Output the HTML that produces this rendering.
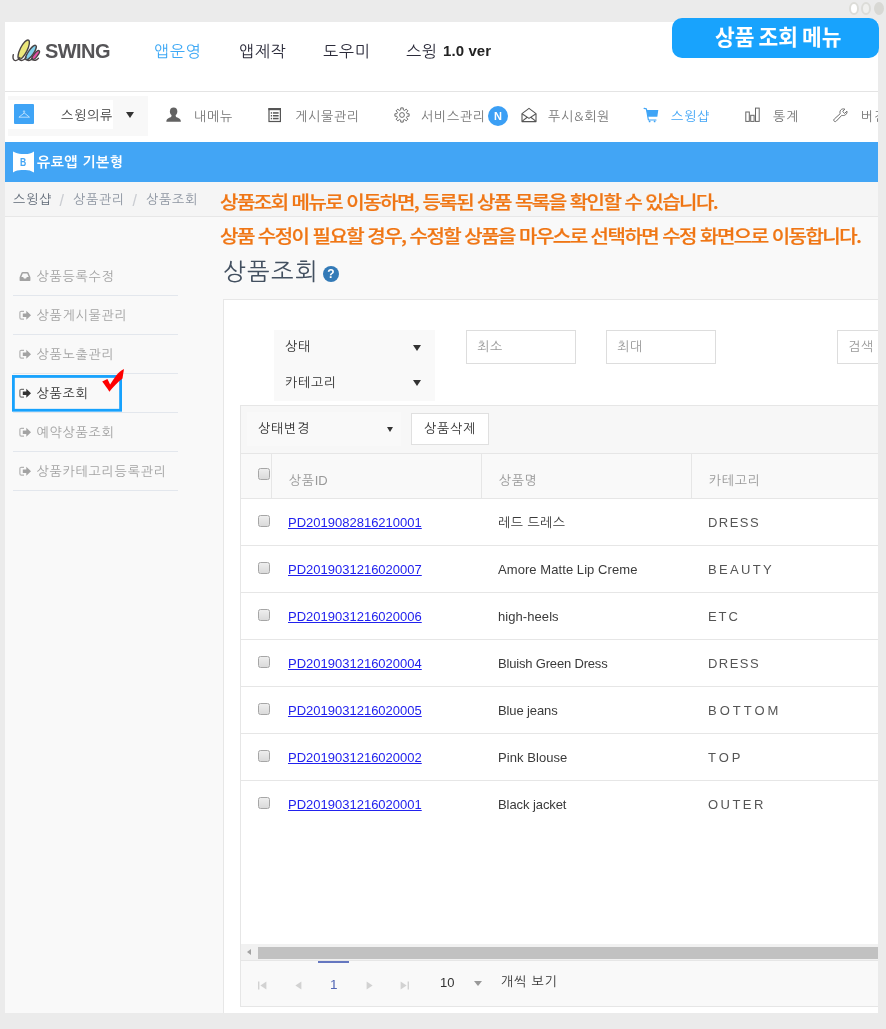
<!DOCTYPE html>
<html lang="ko">
<head>
<meta charset="utf-8">
<title>상품 조회 메뉴</title>
<style>
*{box-sizing:border-box;margin:0;padding:0}
html,body{width:886px;height:1029px;overflow:hidden;background:#ebebeb}
body{position:relative;font-family:"Liberation Sans","NanumGothic","Noto Sans CJK KR",sans-serif;font-size:13px;color:#333}
.abs{position:absolute}
#app{position:absolute;left:5px;top:22px;width:873px;height:991px;background:#fff;overflow:hidden}
/* coordinates inside #app are page coords minus (5,22) */
.kr{font-family:"NanumGothic","Liberation Sans","Noto Sans CJK KR",sans-serif}
.nv{font-size:13px;line-height:14px;color:#777;letter-spacing:0.8px;margin-top:0.5px}
.bc{font-size:13px;line-height:14px;color:#8d95a1;letter-spacing:0.8px}
.an{font-family:"Noto Sans CJK KR","NanumGothic",sans-serif;font-weight:500;font-size:20px;line-height:28px;color:#ef7615;letter-spacing:-1.52px;-webkit-text-stroke:0.25px #ef7615;transform:scaleY(0.93);transform-origin:0 0}
.sb{font-size:13px;line-height:14px;letter-spacing:0.8px}
.tri{width:0;height:0;border-left:4.3px solid transparent;border-right:4.3px solid transparent;border-top:6.6px solid #333;margin:0.4px 0 0 0.5px}
.inp{height:34px;border:1px solid #ddd;background:#fff;font-size:13px;line-height:32px;padding-left:10px;color:#999;letter-spacing:0.8px}
.cb{width:12px;height:12px;border:1px solid #a6a6a6;border-radius:2.5px;background:linear-gradient(#eeeeee,#dadada)}
.th{font-size:13px;line-height:14px;color:#999;letter-spacing:0.8px}
.lk{font:13px/14px "Liberation Sans",sans-serif;color:#2222ee;text-decoration:underline}
.nm{font:13px/14px "Liberation Sans","NanumGothic",sans-serif;color:#3a3a3a;letter-spacing:0.07px}
.ct{font:13px/14px "Liberation Sans",sans-serif;color:#555;letter-spacing:2px}
.t{position:absolute;white-space:nowrap;line-height:1}
</style>
</head>
<body>
<div id="app">
<div id="pg" class="abs" style="left:-5px;top:-22px;width:886px;height:1029px;will-change:transform">
<!-- logo -->
<svg class="abs" style="left:12px;top:37px" width="30" height="28" viewBox="0 0 30 28">
 <g stroke="#4a4546" stroke-width="1.4">
 <ellipse cx="11.7" cy="12.6" rx="3.5" ry="10.6" transform="rotate(26.6 11.7 12.6)" fill="#ece77a"/>
 <ellipse cx="18.9" cy="15.6" rx="2.6" ry="8.6" transform="rotate(34.8 18.9 15.6)" fill="#82d2ee"/>
 <ellipse cx="23.6" cy="18.2" rx="1.8" ry="5.7" transform="rotate(39 23.6 18.2)" fill="#e650a6"/>
 </g>
 <path d="M1.3 17.6 C0.5 21 1.4 23.8 3.8 23.6 C5.6 23.4 6.8 22.2 7.8 20.6 M7.2 22.4 C8.6 24.2 11.6 23.8 14 20.6 M15 22.8 C16.4 24.2 18.6 23.6 20.6 21.2 M21 22.6 C22.2 24 24.4 23.4 26.4 21.2" fill="none" stroke="#4a4546" stroke-width="1.4" stroke-linecap="round" stroke-linejoin="round"/>
</svg>
<div class="t" style="left:45px;top:41px;font:bold 20px/20px 'Liberation Sans',sans-serif;color:#555457;letter-spacing:-0.55px" id="swing">SWING</div>
<div class="t kr" id="m1" style="letter-spacing:0.8px;left:154px;top:42px;font-size:16px;line-height:18px;color:#3fa9f5">앱운영</div>
<div class="t kr" id="m2" style="letter-spacing:0.8px;left:239px;top:42px;font-size:16px;line-height:18px;color:#2b2b3a">앱제작</div>
<div class="t kr" id="m3" style="letter-spacing:0.8px;left:323px;top:42px;font-size:16px;line-height:18px;color:#2b2b3a">도우미</div>
<div class="t kr" id="m4" style="letter-spacing:0.8px;left:406px;top:42px;font-size:16px;line-height:18px;color:#2b2b3a">스윙 <span style="font:bold 15px/18px 'Liberation Sans',sans-serif;color:#222;letter-spacing:0.1px;position:relative;top:-1px">1.0 ver</span></div>
<div class="abs" style="left:5px;top:91px;width:873px;height:1px;background:#e4e4e4"></div>

<!-- nav row -->
<div class="abs" style="left:8px;top:96px;width:140px;height:40px;background:#f8f8f8"></div>
<div class="abs" style="left:8px;top:100px;width:105px;height:29px;background:#fff"></div>
<div class="abs" style="left:14px;top:104px;width:20px;height:20px;background:#3fa4f6;border-radius:1px"></div>
<svg class="abs" style="left:14px;top:104px" width="20" height="20" viewBox="0 0 20 20"><path d="M10 8.6 L4.9 12.6 L15.1 12.6 Z M10 8.6 L10 7.9 C10 7.4 10.7 7.3 10.7 6.8 C10.7 6.3 10.3 6.1 10 6.1 C9.6 6.1 9.3 6.4 9.3 6.8" fill="none" stroke="#d4ebff" stroke-width="0.8" stroke-linejoin="round" stroke-linecap="round" transform="translate(0 0.6)"/></svg>
<div class="t kr nv" id="n0" style="left:61px;top:108.5px;color:#3a3a3a">스윙의류</div>
<div class="abs" style="left:125.5px;top:112px;width:0;height:0;border-left:4.25px solid transparent;border-right:4.25px solid transparent;border-top:6px solid #333"></div>
<!-- person -->
<svg class="abs" style="left:166px;top:107px" width="16" height="16" viewBox="0 0 16 16"><ellipse cx="7.6" cy="4.6" rx="3.7" ry="4.1" fill="#626262"/><path d="M5.6 7.4 L9.6 7.4 C9.6 9.4 10 10 11.4 10.6 C13.4 11.4 14.8 12.4 14.9 14.7 L0.3 14.7 C0.4 12.4 1.8 11.4 3.8 10.6 C5.2 10 5.6 9.4 5.6 7.4 Z" fill="#626262"/></svg>
<div class="t kr nv" id="n1" style="left:194px;top:109px">내메뉴</div>
<!-- list -->
<svg class="abs" style="left:268px;top:107px" width="14" height="16" viewBox="0 0 14 16"><rect x="1" y="1.8" width="11.4" height="12.7" fill="#fff" stroke="#555" stroke-width="1.2"/><rect x="0.4" y="1" width="12.6" height="2.2" fill="#555"/><g fill="#555"><rect x="2.8" y="5.2" width="1.3" height="1.5"/><rect x="5" y="5.2" width="5.6" height="1.5"/><rect x="2.8" y="8" width="1.3" height="1.5"/><rect x="5" y="8" width="5.6" height="1.5"/><rect x="2.8" y="10.8" width="1.3" height="1.5"/><rect x="5" y="10.8" width="5.6" height="1.5"/></g></svg>
<div class="t kr nv" id="n2" style="left:295px;top:109px">게시물관리</div>
<!-- gear -->
<svg class="abs" style="left:393.6px;top:107px" width="16" height="16" viewBox="0 0 16 16"><path d="M6.74 2.85 L6.78 0.90 L9.22 0.90 L9.26 2.85 L10.75 3.47 L12.16 2.12 L13.88 3.84 L12.53 5.25 L13.15 6.74 L15.10 6.78 L15.10 9.22 L13.15 9.26 L12.53 10.75 L13.88 12.16 L12.16 13.88 L10.75 12.53 L9.26 13.15 L9.22 15.10 L6.78 15.10 L6.74 13.15 L5.25 12.53 L3.84 13.88 L2.12 12.16 L3.47 10.75 L2.85 9.26 L0.90 9.22 L0.90 6.78 L2.85 6.74 L3.47 5.25 L2.12 3.84 L3.84 2.12 L5.25 3.47 Z" fill="none" stroke="#636363" stroke-width="0.95" stroke-linejoin="round"/><circle cx="8" cy="8" r="2.4" fill="none" stroke="#636363" stroke-width="0.95"/></svg>
<div class="t kr nv" id="n3" style="left:421px;top:109px">서비스관리</div>
<div class="abs" style="left:488px;top:106px;width:20px;height:20px;border-radius:10px;background:#3b9ff5;color:#fff;font:bold 11px/20px 'Liberation Sans',sans-serif;text-align:center">N</div>
<!-- mail -->
<svg class="abs" style="left:521px;top:107px" width="16" height="16" viewBox="0 0 16 16"><path d="M1 6.6 L8 1.4 L15 6.6 L15 14.6 L1 14.6 Z" fill="none" stroke="#555" stroke-width="1.1" stroke-linejoin="round"/><path d="M1 6.8 L8 11.4 L15 6.8 M1 14.4 L6.2 10.2 M15 14.4 L9.8 10.2" fill="none" stroke="#555" stroke-width="1.1" stroke-linejoin="round"/></svg>
<div class="t kr nv" id="n4" style="left:548px;top:109px">푸시&amp;회원</div>
<!-- cart -->
<svg class="abs" style="left:643px;top:107px" width="16" height="16" viewBox="0 0 16 16"><path d="M1.1 1.4 L3.4 1.8 L5.4 13 L13 13" fill="none" stroke="#3fa4f6" stroke-width="1.2" stroke-linejoin="round" stroke-linecap="round"/><path d="M3.6 3.1 L15.3 3.1 L14.3 9.7 L4.8 9.7 Z" fill="#3fa4f6"/><circle cx="6.6" cy="14.4" r="0.9" fill="#3fa4f6"/><circle cx="11.6" cy="14.4" r="0.9" fill="#3fa4f6"/></svg>
<div class="t kr nv" id="n5" style="left:671px;top:109px;color:#3fa4f6">스윙샵</div>
<!-- bars -->
<svg class="abs" style="left:745px;top:107px" width="16" height="16" viewBox="0 0 16 16"><g fill="none" stroke="#666" stroke-width="1"><rect x="0.8" y="5" width="3.5" height="9.4"/><rect x="5.7" y="8.3" width="3.4" height="6.1"/><rect x="10.5" y="1.1" width="3.7" height="13.3"/></g></svg>
<div class="t kr nv" id="n6" style="left:773px;top:109px">통계</div>
<!-- wrench -->
<svg class="abs" style="left:832px;top:107px" width="17" height="16" viewBox="0 0 17 16"><path d="M14.9 4.2 L12.6 6.4 L10.7 4.5 L12.8 2.1 C11.2 1.6 9.5 2 8.6 3.2 C7.8 4.3 7.8 5.6 8.2 6.7 L2.3 12 C1.6 12.6 1.6 13.6 2.2 14.2 C2.8 14.8 3.7 14.7 4.3 14.1 L9.8 8.3 C11 8.8 12.5 8.6 13.6 7.7 C14.8 6.7 15.3 5.4 14.9 4.2 Z" fill="none" stroke="#666" stroke-width="0.95" stroke-linejoin="round"/></svg>
<div class="t kr nv" id="n7" style="left:861px;top:109px">버전관리</div>

<!-- blue bar -->
<div class="abs" style="left:5px;top:142px;width:873px;height:40px;background:#42a5f5"></div>
<svg class="abs" style="left:13px;top:151px" width="21" height="22" viewBox="0 0 21 22"><path d="M0 0.6 C3.5 2.8 7 3.3 10.5 2.9 C14 3.3 17.5 2.8 21 0.4 L21 21.6 C17.5 19.2 14 18.7 10.5 19.1 C7 18.7 3.5 19.2 0 21.4 Z" fill="#fff"/></svg>
<div class="t" style="left:20px;top:157px;font:bold 10.5px/11px 'Liberation Sans',sans-serif;color:#42a5f5;transform:scaleX(0.82);transform-origin:0 0">B</div>
<div class="t kr" id="bb" style="left:37px;top:154px;font-size:14px;line-height:16px;font-weight:bold;color:#fff;letter-spacing:0.5px">유료앱 기본형</div>
<!-- breadcrumb -->
<div class="abs" style="left:5px;top:182px;width:873px;height:35px;background:#f5f5f5;border-bottom:1px solid #e7e7e7"></div>
<div class="abs" style="left:5px;top:217px;width:873px;height:796px;background:#f9f9f9"></div>
<div class="t kr bc" id="bc1" style="margin-top:1px;left:13px;top:192px;color:#606a77">스윙샵</div>
<div class="t" id="sl1" style="left:59.5px;top:192px;font:16px/18px 'Liberation Sans',sans-serif;color:#c9ccd1">/</div>
<div class="t kr bc" id="bc2" style="margin-top:1px;left:73px;top:192px">상품관리</div>
<div class="t" id="sl2" style="left:132.5px;top:192px;font:16px/18px 'Liberation Sans',sans-serif;color:#c9ccd1">/</div>
<div class="t kr bc" id="bc3" style="margin-top:1px;left:146px;top:192px">상품조회</div>
<!-- orange annotation -->
<div class="t an" id="an1" style="left:220px;top:192.4px">상품조회 메뉴로 이동하면, 등록된 상품 목록을 확인할 수 있습니다.</div>
<div class="t an" id="an2" style="left:220px;top:225.6px">상품 수정이 필요할 경우, 수정할 상품을 마우스로 선택하면 수정 화면으로 이동합니다.</div>

<!-- sidebar -->
<svg class="abs" style="left:19px;top:271px" width="13" height="11" viewBox="0 0 13 11"><path d="M0.6 6.2 L2.6 1.6 C2.8 1.1 3.2 0.9 3.7 0.9 L8.3 0.9 C8.8 0.9 9.2 1.1 9.4 1.6 L11.4 6.2 L11.4 9.2 C11.4 9.7 11 10.1 10.5 10.1 L1.5 10.1 C1 10.1 0.6 9.7 0.6 9.2 Z M2.3 6 L4.2 6 L4.9 7.4 L7.1 7.4 L7.8 6 L9.7 6 L8.2 2.5 L3.8 2.5 Z" fill="#a3a3a3" fill-rule="evenodd"/></svg>
<div class="t kr sb" id="sb0" style="left:36.5px;top:270px;color:#a3a3a3">상품등록수정</div>
<div class="abs" style="left:13px;top:295px;width:165px;height:1px;background:#e3e7ed"></div>
<svg class="abs" style="left:19px;top:310px" width="13" height="11" viewBox="0 0 13 11"><path d="M5 1.3 L2.3 1.3 C1.4 1.3 0.9 1.9 0.9 2.7 L0.9 7.7 C0.9 8.5 1.4 9.1 2.3 9.1 L5 9.1" fill="none" stroke="#b4b4b4" stroke-width="1.2"/><path d="M3.8 3.5 L7.3 3.5 L7.3 0.7 L12 5.2 L7.3 9.7 L7.3 6.9 L3.8 6.9 Z" fill="#a3a3a3"/></svg>
<div class="t kr sb" id="sb1" style="left:36.5px;top:309px;color:#a3a3a3">상품게시물관리</div>
<div class="abs" style="left:13px;top:334px;width:165px;height:1px;background:#e3e7ed"></div>
<svg class="abs" style="left:19px;top:349px" width="13" height="11" viewBox="0 0 13 11"><path d="M5 1.3 L2.3 1.3 C1.4 1.3 0.9 1.9 0.9 2.7 L0.9 7.7 C0.9 8.5 1.4 9.1 2.3 9.1 L5 9.1" fill="none" stroke="#b4b4b4" stroke-width="1.2"/><path d="M3.8 3.5 L7.3 3.5 L7.3 0.7 L12 5.2 L7.3 9.7 L7.3 6.9 L3.8 6.9 Z" fill="#a3a3a3"/></svg>
<div class="t kr sb" id="sb2" style="left:36.5px;top:348px;color:#a3a3a3">상품노출관리</div>
<div class="abs" style="left:13px;top:373px;width:165px;height:1px;background:#e3e7ed"></div>
<svg class="abs" style="left:19px;top:388px" width="13" height="11" viewBox="0 0 13 11"><path d="M5 1.3 L2.3 1.3 C1.4 1.3 0.9 1.9 0.9 2.7 L0.9 7.7 C0.9 8.5 1.4 9.1 2.3 9.1 L5 9.1" fill="none" stroke="#777" stroke-width="1.2"/><path d="M3.8 3.5 L7.3 3.5 L7.3 0.7 L12 5.2 L7.3 9.7 L7.3 6.9 L3.8 6.9 Z" fill="#333"/></svg>
<div class="t kr sb" id="sb3" style="left:36.5px;top:387px;color:#333">상품조회</div>
<div class="abs" style="left:13px;top:412px;width:165px;height:1px;background:#e3e7ed"></div>
<svg class="abs" style="left:19px;top:427px" width="13" height="11" viewBox="0 0 13 11"><path d="M5 1.3 L2.3 1.3 C1.4 1.3 0.9 1.9 0.9 2.7 L0.9 7.7 C0.9 8.5 1.4 9.1 2.3 9.1 L5 9.1" fill="none" stroke="#b4b4b4" stroke-width="1.2"/><path d="M3.8 3.5 L7.3 3.5 L7.3 0.7 L12 5.2 L7.3 9.7 L7.3 6.9 L3.8 6.9 Z" fill="#a3a3a3"/></svg>
<div class="t kr sb" id="sb4" style="left:36.5px;top:426px;color:#a3a3a3">예약상품조회</div>
<div class="abs" style="left:13px;top:451px;width:165px;height:1px;background:#e3e7ed"></div>
<svg class="abs" style="left:19px;top:466px" width="13" height="11" viewBox="0 0 13 11"><path d="M5 1.3 L2.3 1.3 C1.4 1.3 0.9 1.9 0.9 2.7 L0.9 7.7 C0.9 8.5 1.4 9.1 2.3 9.1 L5 9.1" fill="none" stroke="#b4b4b4" stroke-width="1.2"/><path d="M3.8 3.5 L7.3 3.5 L7.3 0.7 L12 5.2 L7.3 9.7 L7.3 6.9 L3.8 6.9 Z" fill="#a3a3a3"/></svg>
<div class="t kr sb" id="sb5" style="left:36.5px;top:465px;color:#a3a3a3">상품카테고리등록관리</div>
<div class="abs" style="left:13px;top:490px;width:165px;height:1px;background:#e3e7ed"></div>
<svg class="abs" style="left:10px;top:373px" width="116" height="42" viewBox="0 0 116 42"><rect x="3.4" y="3.45" width="107.2" height="33.8" fill="none" stroke="#17a2fd" stroke-width="2.8"/></svg>
<svg class="abs" style="left:100px;top:366px" width="26" height="28" viewBox="0 0 26 28"><path d="M2.2 15.4 L7.4 12.9 C8.4 14.8 9.3 16.7 10.1 18.6 C12 15.4 14 12.3 16.2 9.5 C18.4 6.8 21 4.6 23.9 3 C23.8 4.6 23.5 6.2 23.2 7.7 L22.5 12.5 C20 14.4 17.6 16.6 15.3 19 C13.2 21.2 11.2 23.5 9.4 25.8 C8.3 23.9 7.1 22.1 5.8 20.4 C4.7 18.7 3.5 17 2.2 15.4 Z" fill="#fe0000"/></svg>
<!-- title -->
<div class="t kr" id="ttl" style="left:223px;top:257px;font-size:24px;line-height:28px;color:#435060;letter-spacing:1.5px">상품조회</div>
<div class="abs" style="left:323px;top:266px;width:16px;height:16px;border-radius:8px;background:#337ab7;color:#fff;font:bold 12px/16px 'Liberation Sans',sans-serif;text-align:center">?</div>
<!-- panel -->
<div class="abs" style="left:223px;top:299px;width:700px;height:730px;background:#fff;border:1px solid #e7e7e7"></div>
<div class="abs" style="left:274px;top:330px;width:161px;height:71px;background:#f9f9f9"></div>
<div class="t kr" id="s1" style="left:285px;top:340px;font-size:13px;line-height:14px;color:#333;letter-spacing:0.8px">상태</div>
<div class="abs tri" style="left:412px;top:345px"></div>
<div class="t kr" id="s2" style="left:285px;top:376px;font-size:13px;line-height:14px;color:#333;letter-spacing:0.8px">카테고리</div>
<div class="abs tri" style="left:412px;top:380px"></div>
<div class="abs inp" style="left:466px;top:330px;width:110px"><span class="kr">최소</span></div>
<div class="abs inp" style="left:606px;top:330px;width:110px"><span class="kr">최대</span></div>
<div class="abs inp" style="left:837px;top:330px;width:110px"><span class="kr">검색</span></div>
<!-- grid -->
<div class="abs" style="left:240px;top:405px;width:700px;height:602px;border:1px solid #e6e6e6;background:#fff"></div>
<div class="abs" style="left:241px;top:406px;width:700px;height:47px;background:#f7f7f7"></div>
<div class="abs" style="left:247px;top:412px;width:154px;height:34px;background:#f9f9f9"></div>
<div class="t kr" id="tb1" style="left:258px;top:422px;font-size:13px;line-height:14px;color:#333;letter-spacing:0.8px">상태변경</div>
<div class="abs" style="left:386.6px;top:427px;width:0;height:0;border-left:3.9px solid transparent;border-right:3.9px solid transparent;border-top:5.6px solid #333"></div>
<div class="abs kr" id="btn" style="left:411px;top:413px;width:78px;height:32px;border:1px solid #e0e0e0;background:#fff;font-size:13px;line-height:30px;text-align:center;color:#333;letter-spacing:0.8px">상품삭제</div>
<div class="abs" style="left:241px;top:453px;width:700px;height:46px;background:#f9f9f9;border-top:1px solid #e6e6e6;border-bottom:1px solid #e6e6e6"></div>
<div class="abs" style="left:271px;top:453px;width:1px;height:45px;background:#e6e6e6"></div>
<div class="abs" style="left:481px;top:453px;width:1px;height:45px;background:#e6e6e6"></div>
<div class="abs" style="left:691px;top:453px;width:1px;height:45px;background:#e6e6e6"></div>
<div class="abs cb" style="left:258px;top:468px"></div>
<div class="t kr th" id="th1" style="left:288.7px;top:474px">상품<span style="font-family:'Liberation Sans',sans-serif;letter-spacing:0">ID</span></div>
<div class="t kr th" id="th2" style="left:498.7px;top:474px">상품명</div>
<div class="t kr th" id="th3" style="left:708.7px;top:474px">카테고리</div>
<div class="abs cb" style="left:258px;top:515px"></div>
<div class="t lk" id="lk0" style="left:288px;top:516px">PD2019082816210001</div>
<div class="t nm" id="nm0" style="letter-spacing:0.45px;left:498px;top:516px">레드 드레스</div>
<div class="t ct" id="ct0" style="letter-spacing:1.45px;left:708px;top:516px">DRESS</div>
<div class="abs" style="left:241px;top:545px;width:700px;height:1px;background:#e6e6e6"></div>
<div class="abs cb" style="left:258px;top:562px"></div>
<div class="t lk" id="lk1" style="left:288px;top:563px">PD2019031216020007</div>
<div class="t nm" id="nm1" style="left:498px;top:563px">Amore Matte Lip Creme</div>
<div class="t ct" id="ct1" style="letter-spacing:2.35px;left:708px;top:563px">BEAUTY</div>
<div class="abs" style="left:241px;top:592px;width:700px;height:1px;background:#e6e6e6"></div>
<div class="abs cb" style="left:258px;top:609px"></div>
<div class="t lk" id="lk2" style="left:288px;top:610px">PD2019031216020006</div>
<div class="t nm" id="nm2" style="left:498px;top:610px">high-heels</div>
<div class="t ct" id="ct2" style="letter-spacing:1.9px;left:708px;top:610px">ETC</div>
<div class="abs" style="left:241px;top:639px;width:700px;height:1px;background:#e6e6e6"></div>
<div class="abs cb" style="left:258px;top:656px"></div>
<div class="t lk" id="lk3" style="left:288px;top:657px">PD2019031216020004</div>
<div class="t nm" id="nm3" style="letter-spacing:-0.18px;left:498px;top:657px">Bluish Green Dress</div>
<div class="t ct" id="ct3" style="letter-spacing:1.45px;left:708px;top:657px">DRESS</div>
<div class="abs" style="left:241px;top:686px;width:700px;height:1px;background:#e6e6e6"></div>
<div class="abs cb" style="left:258px;top:703px"></div>
<div class="t lk" id="lk4" style="left:288px;top:704px">PD2019031216020005</div>
<div class="t nm" id="nm4" style="letter-spacing:-0.12px;left:498px;top:704px">Blue jeans</div>
<div class="t ct" id="ct4" style="letter-spacing:3.0px;left:708px;top:704px">BOTTOM</div>
<div class="abs" style="left:241px;top:733px;width:700px;height:1px;background:#e6e6e6"></div>
<div class="abs cb" style="left:258px;top:750px"></div>
<div class="t lk" id="lk5" style="left:288px;top:751px">PD2019031216020002</div>
<div class="t nm" id="nm5" style="left:498px;top:751px">Pink Blouse</div>
<div class="t ct" id="ct5" style="letter-spacing:3.0px;left:708px;top:751px">TOP</div>
<div class="abs" style="left:241px;top:780px;width:700px;height:1px;background:#e6e6e6"></div>
<div class="abs cb" style="left:258px;top:797px"></div>
<div class="t lk" id="lk6" style="left:288px;top:798px">PD2019031216020001</div>
<div class="t nm" id="nm6" style="letter-spacing:-0.08px;left:498px;top:798px">Black jacket</div>
<div class="t ct" id="ct6" style="letter-spacing:2.45px;left:708px;top:798px">OUTER</div>
<!-- scrollbar -->
<div class="abs" style="left:241px;top:944px;width:700px;height:16px;background:#f1f1f1"></div>
<div class="abs" style="left:258px;top:947px;width:700px;height:12px;background:#c1c1c1"></div>
<div class="abs" style="left:246.5px;top:948.5px;width:0;height:0;border-top:3.5px solid transparent;border-bottom:3.5px solid transparent;border-right:4px solid #a3a3a3"></div>
<!-- pager -->
<div class="abs" style="left:241px;top:960px;width:700px;height:46px;background:#f9f9f9;border-top:1px solid #e6e6e6"></div>
<div class="abs" style="left:318px;top:961px;width:31px;height:1.6px;background:#6577c0"></div>
<div class="t" id="pg1" style="left:330px;top:978px;font:13.5px/14px 'Liberation Sans',sans-serif;color:#5266b4">1</div>
<svg class="abs" style="left:258px;top:980.7px" width="9" height="9" viewBox="0 0 9 9"><rect x="0" y="0.5" width="1.4" height="8" fill="#d2d2d2"/><path d="M8.4 0.5 L8.4 8.5 L2.4 4.5 Z" fill="#d2d2d2"/></svg>
<svg class="abs" style="left:294px;top:980.7px" width="9" height="9" viewBox="0 0 9 9"><path d="M7.4 0.5 L7.4 8.5 L1.4 4.5 Z" fill="#d2d2d2"/></svg>
<svg class="abs" style="left:365px;top:980.7px" width="9" height="9" viewBox="0 0 9 9"><path d="M1.6 0.5 L1.6 8.5 L7.6 4.5 Z" fill="#d2d2d2"/></svg>
<svg class="abs" style="left:400px;top:980.7px" width="9" height="9" viewBox="0 0 9 9"><rect x="7.6" y="0.5" width="1.4" height="8" fill="#d2d2d2"/><path d="M0.6 0.5 L0.6 8.5 L6.6 4.5 Z" fill="#d2d2d2"/></svg>
<div class="t" id="pg10" style="left:440px;top:976px;font:13px/14px 'Liberation Sans',sans-serif;color:#333">10</div>
<div class="abs" style="left:473.7px;top:981px;width:0;height:0;border-left:4.3px solid transparent;border-right:4.3px solid transparent;border-top:5.5px solid #999"></div>
<div class="t kr" id="pgt" style="left:501px;top:975px;font-size:13px;line-height:14px;color:#333;letter-spacing:0.8px">개씩 보기</div>

</div>
</div>
<div class="abs" style="left:672px;top:18px;width:207px;height:40px;border-radius:10px;background:#18a3fd"></div>
<div class="t" id="lbl" style="left:715.4px;top:19px;transform:scaleX(0.975);word-spacing:-2px;font-family:'Noto Sans CJK KR','NanumGothic',sans-serif;font-weight:700;font-size:22px;line-height:32px;color:#fff;transform-origin:0 0">상품 조회 메뉴</div>
<div class="abs" style="left:849px;top:2px;width:10px;height:13px;border-radius:50%;background:#fff;border:2px solid #dcdcd8"></div>
<div class="abs" style="left:861px;top:2px;width:10px;height:13px;border-radius:50%;background:#f0f0ee;border:2px solid #dcdcd8"></div>
<div class="abs" style="left:874px;top:2px;width:10px;height:13px;border-radius:50%;background:#d8d8d4"></div>

</body>
</html>
